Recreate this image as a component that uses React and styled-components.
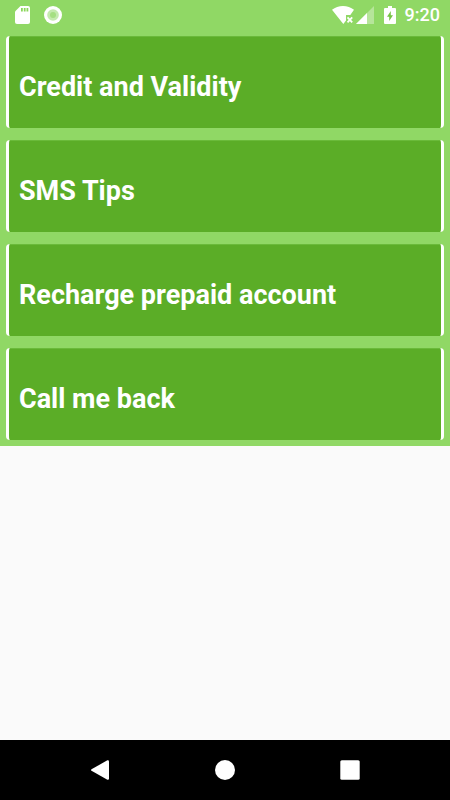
import React from "react";
import styled, { createGlobalStyle } from "styled-components";

const GlobalStyle = createGlobalStyle`
  * { box-sizing: border-box; }
  body {
    margin: 0;
    background: #fafafa;
    font-family: Roboto, "Liberation Sans", sans-serif;
  }
`;

const Screen = styled.div`
  display: flex;
  flex-direction: column;
  min-height: 100vh;
`;

const StatusBar = styled.header`
  display: flex;
  align-items: center;
  justify-content: space-between;
  height: 30px;
  padding: 0 10px 0 15px;
  background: #90d865;
  color: #fff;
`;

const StatusGroup = styled.div`
  display: flex;
  align-items: center;
  gap: ${({ $gap }) => $gap}px;
`;

const Icon = styled.svg`
  display: block;
  flex: none;
`;

const Clock = styled.time`
  font-size: 18px;
  line-height: 24px;
  font-weight: 500;
`;

const Menu = styled.main`
  display: flex;
  flex-direction: column;
  gap: 12px;
  padding: 6px;
  background: #90d865;
`;

const MenuCard = styled.button`
  display: flex;
  align-items: center;
  height: 92px;
  padding: 10px 10px 0;
  border: solid #fff;
  border-width: 0 3px;
  border-radius: 4px;
  background: #5bad27;
  box-shadow: inset 0 1px 0 #6aba3a;
  color: #fff;
  font-family: inherit;
  font-size: 27px;
  line-height: 32px;
  font-weight: 700;
  text-align: left;
  cursor: pointer;
`;

const NavBar = styled.nav`
  display: flex;
  align-items: center;
  justify-content: center;
  gap: 65px;
  height: 60px;
  margin-top: auto;
  background: #000;
`;

const NavButton = styled.button`
  display: flex;
  align-items: center;
  justify-content: center;
  width: 60px;
  height: 60px;
  padding: 0;
  border: 0;
  background: none;
  color: #fff;
  cursor: pointer;
`;

const items = [
  "Credit and Validity",
  "SMS Tips",
  "Recharge prepaid account",
  "Call me back",
];

function SdCardIcon() {
  return (
    <Icon width="15" height="18" viewBox="0 0 15 18" aria-hidden="true">
      <path d="M5.500 0H13a2 2 0 0 1 2 2v14a2 2 0 0 1-2 2H2a2 2 0 0 1-2-2V5.500z" fill="#fff" />
      <path d="M6 2h1.800v3.500H6zM8.800 2h1.800v3.500H8.800zM11.500 2h1.800v3.500h-1.800z" fill="#8bd75b" />
    </Icon>
  );
}

function RecordIcon() {
  return (
    <Icon width="18" height="18" viewBox="0 0 18 18" aria-hidden="true">
      <circle cx="9" cy="9" r="9" fill="#fff" />
      <circle cx="9" cy="9" r="5.800" fill="#c4eaae" />
      <circle cx="9" cy="9" r="3" fill="#a5df82" />
    </Icon>
  );
}

function WifiIcon() {
  return (
    <Icon width="22" height="18" viewBox="0 0 22 18" aria-hidden="true">
      <path d="M0 3.800C3 1.300 7 0 11 0s8 1.300 11 3.800L18.300 9H14v5.500L11.300 18z" fill="#fff" />
      <path d="m15.500 11.300 4.700 5m0-5-4.700 5" stroke="#fff" strokeWidth="1.800" />
    </Icon>
  );
}

function SignalIcon() {
  return (
    <Icon width="18" height="18" viewBox="0 0 18 18" aria-hidden="true">
      <path d="M0 18 18 0v18z" fill="#fff" fillOpacity=".35" />
      <path d="M0 18 11 7v11z" fill="#fff" />
    </Icon>
  );
}

function BatteryIcon() {
  return (
    <Icon width="12" height="18" viewBox="0 0 12 18" aria-hidden="true">
      <path d="M4 0h4v2h3a1 1 0 0 1 1 1v14a1 1 0 0 1-1 1H1a1 1 0 0 1-1-1V3a1 1 0 0 1 1-1h3z" fill="#fff" />
      <path d="M6.800 5 3 10.800h2.200V15L9 9.300H6.800z" fill="#76c345" />
    </Icon>
  );
}

export default function App() {
  return (
    <Screen>
      <GlobalStyle />
      <StatusBar>
        <StatusGroup $gap={14}>
          <SdCardIcon />
          <RecordIcon />
        </StatusGroup>
        <StatusGroup $gap={9}>
          <StatusGroup $gap={10}>
            <StatusGroup $gap={2}>
              <WifiIcon />
              <SignalIcon />
            </StatusGroup>
            <BatteryIcon />
          </StatusGroup>
          <Clock dateTime="09:20">9:20</Clock>
        </StatusGroup>
      </StatusBar>
      <Menu>
        {items.map((item) => (
          <MenuCard key={item} type="button">{item}</MenuCard>
        ))}
      </Menu>
      <NavBar aria-label="System navigation">
        <NavButton type="button" aria-label="Back">
          <Icon width="20" height="20" viewBox="0 0 20 20">
            <path d="M1.500 9.200 17.400.3Q19 0 19 1.500v17q0 1.500-1.600 1.200L1.500 10.800q-1-.8 0-1.600z" fill="currentColor" />
          </Icon>
        </NavButton>
        <NavButton type="button" aria-label="Home">
          <Icon width="20" height="20" viewBox="0 0 20 20">
            <circle cx="10" cy="10" r="10" fill="currentColor" />
          </Icon>
        </NavButton>
        <NavButton type="button" aria-label="Recent apps">
          <Icon width="20" height="20" viewBox="0 0 20 20">
            <rect x=".3" y=".3" width="19.400" height="19.400" rx="1.500" fill="currentColor" />
          </Icon>
        </NavButton>
      </NavBar>
    </Screen>
  );
}
